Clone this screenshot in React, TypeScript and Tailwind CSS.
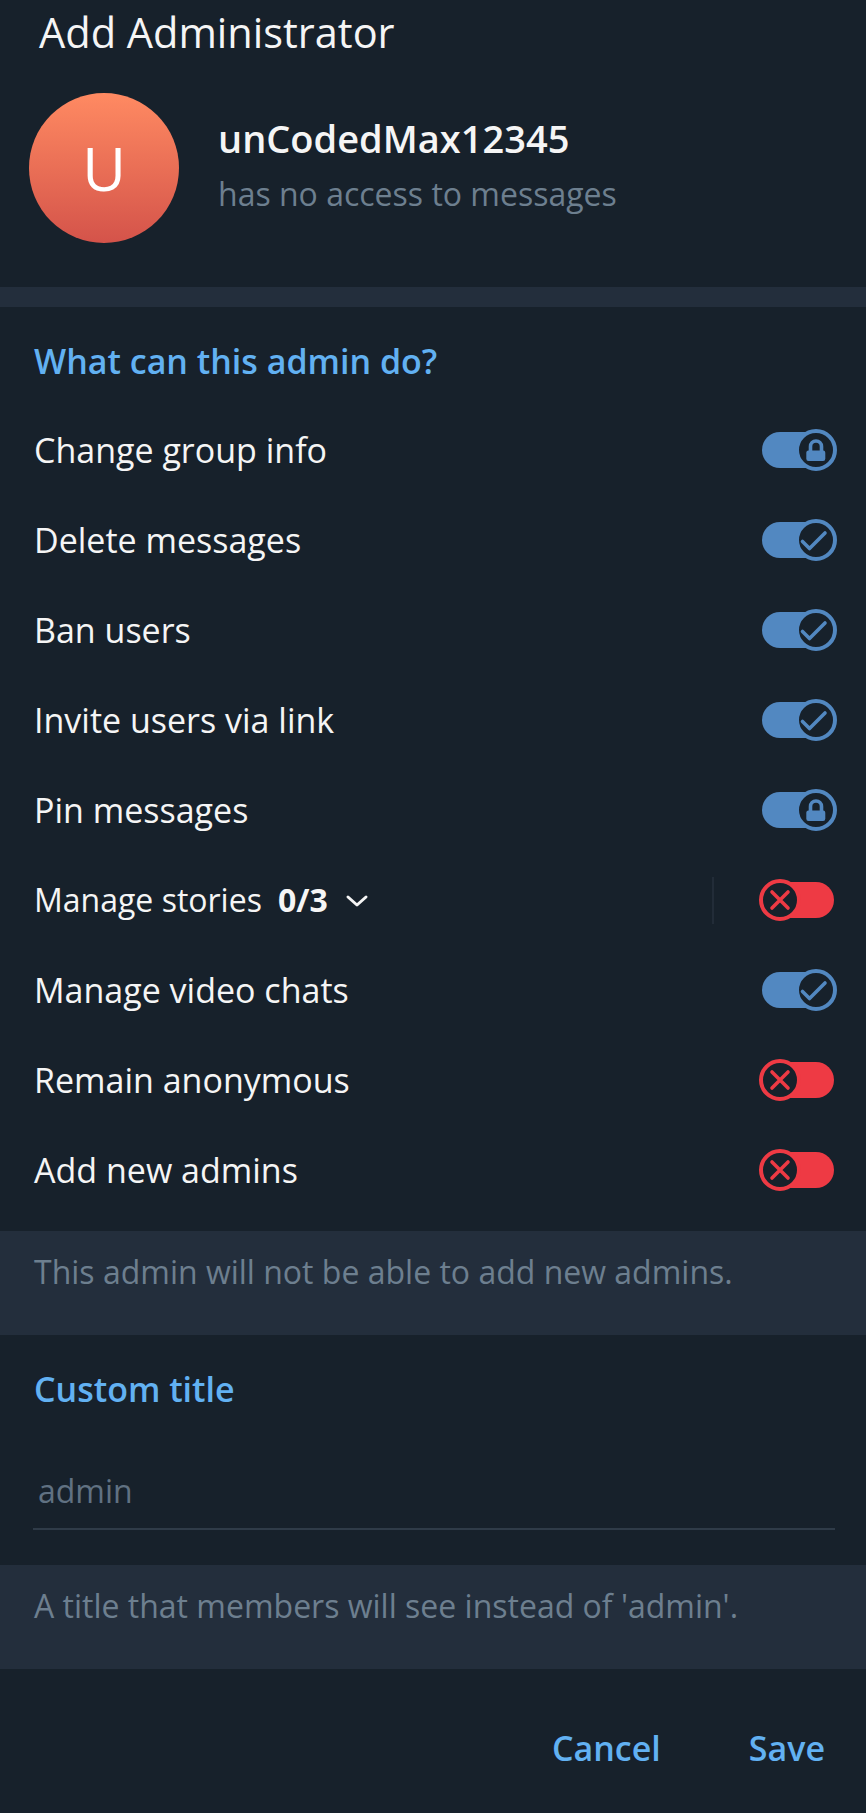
import React from 'react';

type Perm = { label: string; state: 'lock' | 'on' | 'off'; extra?: boolean };

const perms: Perm[] = [
  { label: 'Change group info', state: 'lock' },
  { label: 'Delete messages', state: 'on' },
  { label: 'Ban users', state: 'on' },
  { label: 'Invite users via link', state: 'on' },
  { label: 'Pin messages', state: 'lock' },
  { label: 'Manage stories', state: 'off', extra: true },
  { label: 'Manage video chats', state: 'on' },
  { label: 'Remain anonymous', state: 'off' },
  { label: 'Add new admins', state: 'off' },
];

function KnobIcon({ state }: { state: Perm['state'] }) {
  if (state === 'lock') {
    return (
      <svg viewBox="0 0 42 42" className="absolute inset-0 h-[42px] w-[42px]" aria-hidden="true">
        <path d="M15.5 22.5V17.5a5.5 5.5 0 0 1 11 0V22.5" fill="none" stroke="#5288c1" strokeWidth="3.6" />
        <rect x="11.3" y="21.5" width="19" height="10.5" rx="2.2" fill="#5288c1" />
      </svg>
    );
  }
  if (state === 'on') {
    return (
      <svg viewBox="0 0 42 42" className="absolute inset-0 h-[42px] w-[42px]" aria-hidden="true">
        <path d="M7.5 22.5 14.5 29.5 30 14" fill="none" stroke="#5288c1" strokeWidth="3.6" strokeLinecap="round" strokeLinejoin="round" />
      </svg>
    );
  }
  return (
    <svg viewBox="0 0 42 42" className="absolute inset-0 h-[42px] w-[42px]" aria-hidden="true">
      <path d="M13 13 29 29M29 13 13 29" fill="none" stroke="#ee3a44" strokeWidth="3.6" strokeLinecap="round" />
    </svg>
  );
}

function Toggle({ state }: { state: Perm['state'] }) {
  const on = state !== 'off';
  return (
    <div className="relative h-[42px] w-[78px] shrink-0">
      <div
        className={
          on
            ? 'absolute left-[3px] top-[3px] h-[36px] w-[72px] rounded-full bg-[#5288c1]'
            : 'absolute left-[3px] top-[3px] h-[36px] w-[72px] rounded-full bg-[#ee3a44]'
        }
      />
      <div
        className={
          on
            ? 'absolute left-[36px] top-0 h-[42px] w-[42px] rounded-full border-[4px] border-[#5288c1] bg-[#17212b]'
            : 'absolute left-0 top-0 h-[42px] w-[42px] rounded-full border-[4px] border-[#ee3a44] bg-[#17212b]'
        }
      />
      <div className={on ? 'absolute left-[36px] top-0 h-[42px] w-[42px]' : 'absolute left-0 top-0 h-[42px] w-[42px]'}>
        <KnobIcon state={state} />
      </div>
    </div>
  );
}

function PermRow({ perm }: { perm: Perm }) {
  return (
    <div className="flex h-[90px] items-center justify-between pl-[34px] pr-[29px]">
      {perm.extra ? (
        <div className="flex items-center text-[32px] leading-[40px] text-[#f5f5f5]">
          <span>{perm.label}</span>
          <span className="ml-[16px] font-bold">0/3</span>
          <svg viewBox="0 0 24 14" className="ml-[17px] mt-[2px] h-[14px] w-[24px]" aria-hidden="true">
            <path d="M3 3 12 11 21 3" fill="none" stroke="#f5f5f5" strokeWidth="3" strokeLinecap="round" strokeLinejoin="round" />
          </svg>
        </div>
      ) : (
        <span className="text-[34px] leading-[40px] text-[#f5f5f5]">{perm.label}</span>
      )}
      <div className="flex items-center">
        {perm.extra && <div className="mr-[45px] h-[47px] w-[2px] bg-[#222c38]" />}
        <Toggle state={perm.state} />
      </div>
    </div>
  );
}

function InfoBox({ text }: { text: string }) {
  return (
    <div className="h-[104px] bg-[#232e3c] px-[34px] pt-[21px] text-[32px] leading-[40px] text-[#6d7f8f]">
      {text}
    </div>
  );
}

export default function App() {
  return (
    <div className="min-h-screen w-full bg-[#17212b] font-['Open_Sans','Noto_Sans',sans-serif] text-white">
      <header className="px-[39px] pt-[8px]">
        <h1 className="text-[41.5px] font-medium leading-[48px] text-[#f5f5f5]">Add Administrator</h1>
      </header>

      <div className="mt-[37px] flex items-start pb-[44px] pl-[29px]">
        <div className="flex h-[150px] w-[150px] shrink-0 items-center justify-center rounded-full bg-gradient-to-b from-[#ff8a62] to-[#d4534a]">
          <span className="text-[60px] leading-none text-white">U</span>
        </div>
        <div className="ml-[39px] mt-[21px] flex flex-col">
          <p className="text-[38px] font-semibold leading-[48px] text-[#f5f5f5]">unCodedMax12345</p>
          <p className="mt-[12px] text-[32px] leading-[40px] text-[#6d7f8f]">has no access to messages</p>
        </div>
      </div>

      <div className="h-[20px] bg-[#232e3c]" />

      <h2 className="px-[34px] pt-[34px] text-[34px] font-semibold leading-[40px] text-[#62b1f2]">
        What can this admin do?
      </h2>
      <div className="mt-[24px] flex flex-col">
        {perms.map((p) => (
          <PermRow key={p.label} perm={p} />
        ))}
      </div>

      <div className="mt-[16px]">
        <InfoBox text="This admin will not be able to add new admins." />
      </div>

      <h2 className="px-[34px] pt-[34px] text-[34px] font-semibold leading-[40px] text-[#62b1f2]">Custom title</h2>
      <div className="mx-[31px] ml-[33px] mt-[62px] border-b-2 border-[#2f3b48] pb-[17px] pl-[5px]">
        <input
          readOnly
          placeholder="admin"
          className="w-full bg-transparent text-[32px] leading-[40px] text-[#f5f5f5] outline-none placeholder:text-[#607182]"
        />
      </div>

      <div className="mt-[35px]">
        <InfoBox text="A title that members will see instead of 'admin'." />
      </div>

      <div className="flex justify-end gap-[88px] pb-[45px] pr-[41px] pt-[59px] text-[34px] font-semibold leading-[40px] text-[#62b1f2]">
        <button type="button">Cancel</button>
        <button type="button">Save</button>
      </div>
    </div>
  );
}
